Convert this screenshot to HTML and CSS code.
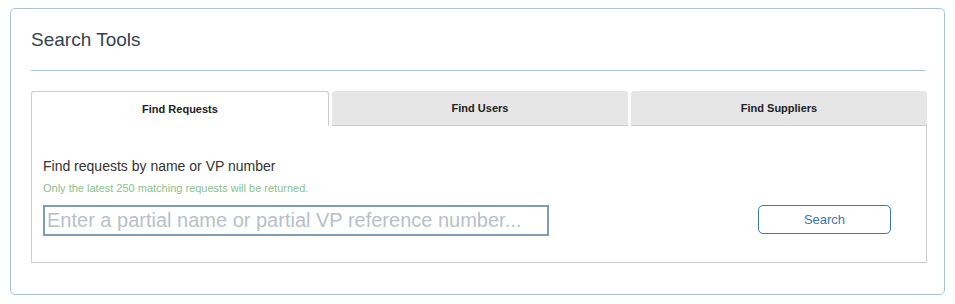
FILE: index.html
```html
<!DOCTYPE html>
<html lang="en">
  <head>
    <meta charset="utf-8"/>
    <title>Search Tools</title>
    <link rel="stylesheet" href="styles.css">
  </head>
  <body>
    <div class="panel">
      <h2 class="panel-title">Search Tools</h2>
      <hr class="rule"/>
      <div class="tabs">
        <div class="tab active">Find Requests</div>
        <div class="tab">Find Users</div>
        <div class="tab">Find Suppliers</div>
      </div>
      <div class="tab-body">
        <p class="label">Find requests by name or VP number</p>
        <p class="hint">Only the latest 250 matching requests will be returned.</p>
        <div class="search-row">
          <input class="search-input" type="text" placeholder="Enter a partial name or partial VP reference number..."/>
          <button class="btn" type="button">Search</button>
        </div>
      </div>
    </div>
  </body>
</html>
```

FILE: styles.css
```css
body {
  margin: 8px 10px;
  font-family: "Liberation Sans", Arial, sans-serif;
  color: #333;
  background: #fff;
}
.panel {
  border: solid 1px #a9c2d7;
  border-radius: 5px;
  padding: 20px 17px 30px 20px;
  height: 235px;
}
.panel-title {
  margin: 0;
  font-size: 19px;
  font-weight: normal;
  color: #34444f;
  line-height: 21px;
}
.rule {
  border: 0;
  border-top: solid 1px #a6c3d8;
  margin: 20px 2px 20px 0;
}
.tabs {
  display: flex;
  gap: 3px;
  height: 35px;
}
.tab {
  flex: 1;
  background: #e6e6e6;
  border-radius: 3px 3px 0 0;
  border-bottom: solid 1px #ccc;
  font-size: 11px;
  font-weight: bold;
  color: #222;
  text-align: center;
  line-height: 34px;
}
.tab.active {
  background: #fff;
  border: solid 1px #ccc;
  border-bottom: none;
}
.tab-body {
  border: solid 1px #ccc;
  border-top: none;
  padding: 31px 35px 26px 11px;
}
.label {
  margin: 0;
  font-size: 14px;
  line-height: 18px;
  color: #333;
}
.hint {
  margin: 6px 0 0;
  font-size: 11px;
  line-height: 14px;
  color: #8cbf8c;
}
.search-row {
  display: flex;
  justify-content: space-between;
  align-items: flex-start;
  margin-top: 10px;
}
.search-input {
  box-sizing: border-box;
  width: 506px;
  height: 31px;
  border: solid 2px #7f9cb5;
  padding: 0 2px;
  font-family: "Liberation Sans", Arial, sans-serif;
  font-size: 20px;
  color: #333;
  outline: none;
}
.search-input::placeholder {
  color: #b9bfc6;
}
.btn {
  box-sizing: border-box;
  width: 133px;
  height: 29px;
  background: #fff;
  border: solid 1px #3b78b0;
  border-radius: 5px;
  font-family: "Liberation Sans", Arial, sans-serif;
  font-size: 13px;
  color: #3a77b0;
}
```
